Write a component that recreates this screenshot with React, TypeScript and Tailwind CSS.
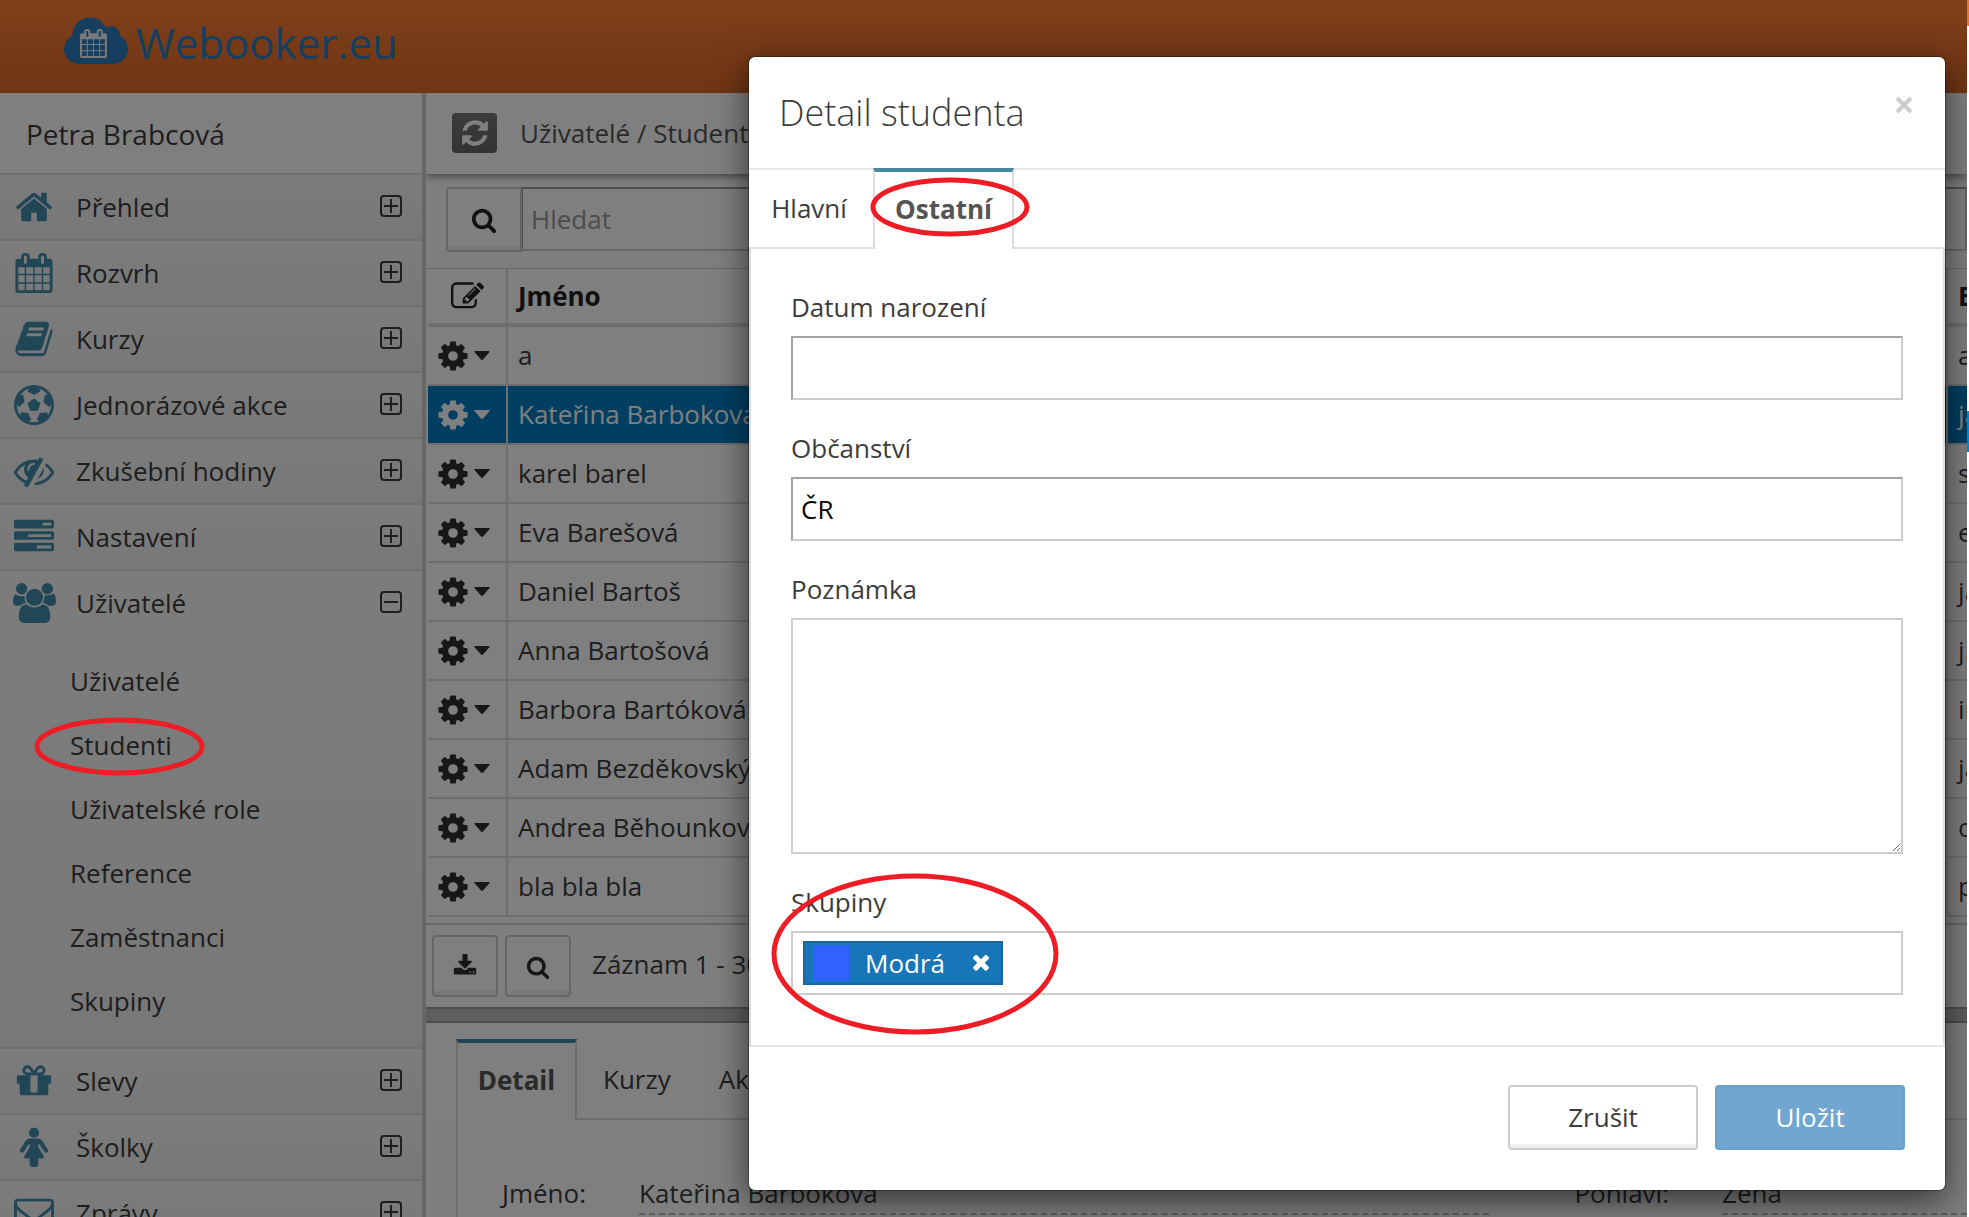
import type { ReactNode } from "react";

const paths = {
  home: "M1472 992v480q0 26-19 45t-45 19h-384v-384h-256v384h-384q-26 0-45-19t-19-45v-480q0-1 .5-3t.5-3l575-474 575 474q1 2 1 6zm223-69l-62 74q-8 9-21 11h-3q-13 0-21-7l-692-577-692 577q-12 8-24 7-13-2-21-11l-62-74q-8-10-7-23.5t11-21.5l719-599q32-26 76-26t76 26l244 204v-195q0-14 9-23t23-9h192q14 0 23 9t9 23v408l219 182q10 8 11 21.5t-7 23.5z",
  calendar:
    "M192 1664h288v-288h-288v288zm352 0h320v-288h-320v288zm-352-352h288v-320h-288v320zm352 0h320v-320h-320v320zm-352-384h288v-288h-288v288zm736 736h320v-288h-320v288zm-384-736h320v-288h-320v288zm768 736h288v-288h-288v288zm-384-352h320v-320h-320v320zm-352-864v-288q0-13-9.5-22.5t-22.5-9.5h-64q-13 0-22.5 9.5t-9.5 22.5v288q0 13 9.5 22.5t22.5 9.5h64q13 0 22.5-9.5t9.5-22.5zm736 864h288v-320h-288v320zm-384-384h320v-288h-320v288zm384 0h288v-288h-288v288zm32-480v-288q0-13-9.5-22.5t-22.5-9.5h-64q-13 0-22.5 9.5t-9.5 22.5v288q0 13 9.5 22.5t22.5 9.5h64q13 0 22.5-9.5t9.5-22.5zm384-64v1280q0 52-38 90t-90 38h-1408q-52 0-90-38t-38-90v-1280q0-52 38-90t90-38h128v-96q0-66 47-113t113-47h64q66 0 113 47t47 113v96h384v-96q0-66 47-113t113-47h64q66 0 113 47t47 113v96h128q52 0 90 38t38 90z",
  book: "M1703 478q40 57 18 129l-275 906q-19 64-76.5 107.5t-122.5 43.5h-923q-77 0-148.5-53.5t-99.5-131.5q-24-67-2-127 0-4 3-27t4-37q1-8-3-21.5t-3-19.5q2-11 8-21t16.5-23.5 16.5-23.5q23-38 45-91.5t30-91.5q3-10 .5-30t-.5-28q3-11 17-28t17-23q21-36 42-92t25-90q1-9-2.5-32t.5-28q4-13 22-30.5t22-22.5q19-26 42.5-84.5t27.5-96.5q1-8-3-25.5t-2-26.5q2-8 9-18t18-23 17-21q8-12 16.5-30.5t15-35 16-36 19.5-32 26.5-23.5 36-11.5 47.5 5.5l-1 3q38-9 51-9h761q74 0 114 56t18 130l-274 906q-36 119-71.5 153.5t-128.5 34.5h-869q-27 0-38 15-11 16-1 43 24 70 144 70h923q29 0 56-15.5t35-41.5l300-987q7-22 5-57 38 15 59 43zm-1064 2q-4 13 2 22.5t20 9.5h608q13 0 25.5-9.5t16.5-22.5l21-64q4-13-2-22.5t-20-9.5h-608q-13 0-25.5 9.5t-16.5 22.5zm-83 256q-4 13 2 22.5t20 9.5h608q13 0 25.5-9.5t16.5-22.5l21-64q4-13-2-22.5t-20-9.5h-608q-13 0-25.5 9.5t-16.5 22.5z",
  futbol:
    "M609 816l287-208 287 208-109 336h-355zm287-816q182 0 348 71t286 191 191 286 71 348-71 348-191 286-286 191-348 71-348-71-286-191-191-286-71-348 71-348 191-286 286-191 348-71zm619 1350q149-203 149-454v-3l-102 89-240-224 63-323 134 12q-150-206-389-282l53 124-287 159-287-159 53-124q-239 76-389 282l135-12 62 323-240 224-102-89v3q0 251 149 454l30-132 326 40 139 298-116 69q117 39 240 39t240-39l-116-69 139-298 326-40z",
  eyeSlash:
    "M555 1335l78-141q-87-63-136-159t-49-203q0-121 61-225-229 117-381 353 167 258 427 375zm389-759q0-20-14-34t-34-14q-125 0-214.5 89.5t-89.5 214.5q0 20 14 34t34 14 34-14 14-34q0-86 61-147t147-61q20 0 34-14t14-34zm363-191q0 7-1 9-106 189-316 567t-315 566l-49 89q-10 16-28 16-12 0-134-70-16-10-16-28 0-12 44-87-143-65-263.5-173t-208.5-245q-20-31-20-69t20-69q153-235 380-371t496-136q89 0 180 17l54-97q10-16 28-16 5 0 18 6t31 15.5 33 18.5 31.5 18.5 19.5 11.5q16 10 16 27zm37 447q0 139-79 253.5t-209 164.500l280-502q8 45 8 84zm448 128q0 35-20 69-39 64-109 145-150 172-347.5 267t-419.5 95l74-132q212-18 392.5-137t301.5-307q-115-179-282-294l63-112q95 64 182.5 153t144.5 184q20 34 20 69z",
  tasks:
    "M1024 1408h640v-128h-640v128zm-384-512h1024v-128h-1024v128zm640-512h384v-128h-384v128zm512 832v256q0 26-19 45t-45 19h-1664q-26 0-45-19t-19-45v-256q0-26 19-45t45-19h1664q26 0 45 19t19 45zm0-512v256q0 26-19 45t-45 19h-1664q-26 0-45-19t-19-45v-256q0-26 19-45t45-19h1664q26 0 45 19t19 45zm0-512v256q0 26-19 45t-45 19h-1664q-26 0-45-19t-19-45v-256q0-26 19-45t45-19h1664q26 0 45 19t19 45z",
  users:
    "M657 896q-162 5-265 128h-134q-82 0-138-40.5t-56-118.5q0-353 124-353 6 0 43.5 21t97.5 42.5 119 21.5q67 0 133-23-5 37-5 66 0 159 81 290zm1071 637q0 120-73 189.5t-194 69.5h-874q-121 0-194-69.5t-73-189.5q0-53 3.5-103.5t14-109 26.5-108.5 43-97.5 62-81 85.5-53.5 111.5-20q10 0 43 21.5t73 48 107 48 135 21.5 135-21.5 107-48 73-48 43-21.5q61 0 111.5 20t85.5 53.5 62 81 43 97.5 26.5 108.5 14 109 3.5 103.5zm-1024-1277q0 106-75 181t-181 75-181-75-75-181 75-181 181-75 181 75 75 181zm704 384q0 159-112.5 271.5t-271.5 112.5-271.5-112.5-112.5-271.5 112.5-271.5 271.5-112.5 271.5 112.5 112.5 271.5zm576 225q0 78-56 118.5t-138 40.5h-134q-103-123-265-128 81-131 81-290 0-29-5-66 66 23 133 23 59 0 119-21.5t97.5-42.5 43.5-21q124 0 124 353zm-128-609q0 106-75 181t-181 75-181-75-75-181 75-181 181-75 181 75 75 181z",
  gift: "M1056 1356v-716h-320v716q0 25 18 38.5t46 13.5h192q28 0 46-13.5t18-38.5zm-456-844h195l-126-161q-26-31-69-31-40 0-68 28t-28 68 28 68 68 28zm688-96q0-40-28-68t-68-28q-43 0-69 31l-125 161h194q40 0 68-28t28-68zm376 256v320q0 14-9 23t-23 9h-96v416q0 40-28 68t-68 28h-1088q-40 0-68-28t-28-68v-416h-96q-14 0-23-9t-9-23v-320q0-14 9-23t23-9h440q-93 0-158.5-65.5t-65.5-158.5 65.5-158.5 158.5-65.5q107 0 168 77l128 165 128-165q61-77 168-77 93 0 158.5 65.5t65.5 158.5-65.5 158.5-158.5 65.5h440q14 0 23 9t9 23z",
  female:
    "M1536 1056q0 40-28 68t-68 28q-51 0-80-43l-227-341h-45v132l247 411q9 15 9 33 0 26-19 45t-45 19h-192v272q0 46-33 79t-79 33h-160q-46 0-79-33t-33-79v-272h-192q-26 0-45-19t-19-45q0-18 9-33l247-411v-132h-45l-227 341q-29 43-80 43-40 0-68-28t-28-68q0-29 16-53l256-384q73-107 176-107h384q103 0 176 107l256 384q16 24 16 53zm-416-800q0 93-65.5 158.5t-158.5 65.5-158.5-65.5-65.5-158.5 65.5-158.5 158.5-65.5 158.5 65.5 65.5 158.5z",
  envelope:
    "M1664 1504v-768q-32 36-69 66-268 206-426 338-51 43-83 67t-86.5 48.5-102.5 24.5h-2q-48 0-102.5-24.5t-86.5-48.5-83-67q-158-132-426-338-37-30-69-66v768q0 13 9.5 22.5t22.5 9.5h1472q13 0 22.5-9.5t9.5-22.5zm0-1051v-24.5l-.5-13-3-12.5-5.5-9-9-7.5-14-2.5h-1472q-13 0-22.5 9.5t-9.5 22.5q0 168 147 284 193 152 401 317 6 5 35 29.5t46 37.5 44.5 31.5 50.5 27.5 43 9h2q20 0 43-9t50.5-27.5 44.5-31.5 46-37.5 35-29.5q208-165 401-317 54-43 100.5-115.5t46.5-131.5zm128-37v1088q0 66-47 113t-113 47h-1472q-66 0-113-47t-47-113v-1088q0-66 47-113t113-47h1472q66 0 113 47t47 113z",
  search:
    "M1216 832q0-185-131.5-316.5t-316.5-131.5-316.5 131.5-131.5 316.5 131.5 316.5 316.5 131.5 316.5-131.5 131.5-316.5zm512 832q0 52-38 90t-90 38q-54 0-90-38l-343-342q-179 124-399 124-143 0-273.5-55.5t-225-150-150-225-55.5-273.5 55.5-273.5 150-225 225-150 273.5-55.5 273.5 55.5 225 150 150 225 55.5 273.5q0 220-124 399l343 343q37 37 37 90z",
  cog: "M1152 896q0-106-75-181t-181-75-181 75-75 181 75 181 181 75 181-75 75-181zm512-109v222q0 12-8 23t-20 13l-185 28q-19 54-39 91 35 50 107 138 10 12 10 25t-9 23q-27 37-99 108t-94 71q-12 0-26-9l-138-108q-44 23-91 38-16 136-29 186-7 28-36 28h-222q-14 0-24.5-8.5t-11.5-21.5l-28-184q-49-16-90-37l-141 107q-10 9-25 9-14 0-25-11-126-114-165-168-7-10-7-23 0-12 8-23 15-21 51-66.5t54-70.5q-27-50-41-99l-183-27q-13-2-21-12.5t-8-23.5v-222q0-12 8-23t19-13l186-28q14-46 39-92-40-57-107-138-10-12-10-24 0-10 9-23 26-36 98.5-107.5t94.5-71.5q13 0 26 10l138 107q44-23 91-38 16-136 29-186 7-28 36-28h222q14 0 24.5 8.5t11.5 21.5l28 184q49 16 90 37l142-107q9-9 24-9 13 0 25 10 129 119 165 170 7 8 7 22 0 12-8 23-15 21-51 66.5t-54 70.5q26 50 41 98l183 28q13 2 21 12.5t8 23.5z",
  refresh:
    "M1639 1056q0 5-1 7-64 268-268 434.5t-478 166.5q-146 0-282.5-55t-243.5-157l-129 129q-19 19-45 19t-45-19-19-45v-448q0-26 19-45t45-19h448q26 0 45 19t19 45-19 45l-137 137q71 66 161 102t187 36q134 0 250-65t186-179q11-17 53-117 8-23 30-23h192q13 0 22.5 9.5t9.5 22.5zm25-800v448q0 26-19 45t-45 19h-448q-26 0-45-19t-19-45 19-45l138-138q-148-137-349-137-134 0-250 65t-186 179q-11 17-53 117-8 23-30 23h-199q-13 0-22.5-9.5t-9.5-22.5v-7q65-268 270-434.5t480-166.5q146 0 284 55.5t245 156.5l130-129q19-19 45-19t45 19 19 45z",
  times:
    "M1490 1322q0 40-28 68l-136 136q-28 28-68 28t-68-28l-294-294-294 294q-28 28-68 28t-68-28l-136-136q-28-28-28-68t28-68l294-294-294-294q-28-28-28-68t28-68l136-136q28-28 68-28t68 28l294 294 294-294q28-28 68-28t68 28l136 136q28 28 28 68t-28 68l-294 294 294 294q28 28 28 68z",
  download:
    "M1344 1344q0-26-19-45t-45-19-45 19-19 45 19 45 45 19 45-19 19-45zm256 0q0-26-19-45t-45-19-45 19-19 45 19 45 45 19 45-19 19-45zm128-224v320q0 40-28 68t-68 28h-1472q-40 0-68-28t-28-68v-320q0-40 28-68t68-28h465l135 136q58 56 136 56t136-56l136-136h464q40 0 68 28t28 68zm-325-569q17 41-14 70l-448 448q-18 19-45 19t-45-19l-448-448q-31-29-14-70 17-39 59-39h256v-448q0-26 19-45t45-19h256q26 0 45 19t19 45v448h256q42 0 59 39z",
  edit: "M888 1184l116-116-152-152-116 116v56h96v96h56zm440-720q-16-16-33 1l-350 350q-17 17-1 33t33-1l350-350q17-17 1-33zm80 594v190q0 119-84.5 203.5t-203.5 84.5h-832q-119 0-203.5-84.5t-84.5-203.5v-832q0-119 84.5-203.5t203.5-84.5h832q63 0 117 25 15 7 18 23 3 17-9 29l-49 49q-14 14-32 8-23-6-45-6h-832q-66 0-113 47t-47 113v832q0 66 47 113t113 47h832q66 0 113-47t47-113v-126q0-13 9-22l64-64q15-15 35-7t20 29zm-96-738l288 288-672 672h-288v-288zm444 132l-92 92-288-288 92-92q28-28 68-28t68 28l152 152q28 28 28 68t-28 68z",
};

type IconName = keyof typeof paths;

function Icon({ name, className, wide }: { name: IconName; className: string; wide?: boolean }) {
  return (
    <svg viewBox={wide ? "64 0 1920 1792" : "0 0 1792 1792"} className={className} fill="currentColor" aria-hidden="true">
      <path d={paths[name]} />
    </svg>
  );
}

function Toggle({ open }: { open?: boolean }) {
  return (
    <svg viewBox="0 0 22 22" className="size-[22px]" fill="none" stroke="currentColor" strokeWidth="2" aria-hidden="true">
      <rect x="1" y="1" width="20" height="20" rx="3" />
      <path d={open ? "M4 11h14" : "M4 11h14M11 4v14"} />
    </svg>
  );
}

function Ring({ className, w, h }: { className: string; w: number; h: number }) {
  return (
    <svg viewBox={`0 0 ${w} ${h}`} className={`pointer-events-none absolute z-20 max-w-none ${className}`} fill="none" aria-hidden="true">
      <ellipse cx={w / 2} cy={h / 2} rx={w / 2 - 3} ry={h / 2 - 3} stroke="#ee1c24" strokeWidth="5" />
    </svg>
  );
}

function MenuItem({ icon, label, open }: { icon: ReactNode; label: string; open?: boolean }) {
  return (
    <button
      type="button"
      className={`flex w-full items-center text-left ${
        open ? "h-[64px] bg-[#f9f9f9]" : "h-[66px] border-b-2 border-[#dedede] bg-linear-to-b from-[#f9f9f9] to-[#f0f0f0]"
      }`}
    >
      <span className="flex w-[68px] shrink-0 justify-center text-[#428eae]">{icon}</span>
      <span className="grow pl-2 text-[26px] leading-9">{label}</span>
      <span className="mr-5 pb-0.5">
        <Toggle open={open} />
      </span>
    </button>
  );
}

const subItems = ["Uživatelé", "Studenti", "Uživatelské role", "Reference", "Zaměstnanci", "Skupiny"];

const students = [
  ["a", "a"],
  ["Kateřina Barboková", "ja"],
  ["karel barel", "s"],
  ["Eva Barešová", "e"],
  ["Daniel Bartoš", "ja"],
  ["Anna Bartošová", "j."],
  ["Barbora Bartóková", "in"],
  ["Adam Bezděkovský", "ja"],
  ["Andrea Běhounková", "o"],
  ["bla bla bla", "p"],
];

function Sidebar() {
  return (
    <aside className="w-[426px] shrink-0 border-r-4 border-[#cfcfcf] bg-[#f4f4f4]">
      <div className="flex h-[82px] items-center border-b-2 border-[#dedede] bg-white pt-0.5 pl-[26px] text-[28px] leading-9">Petra Brabcová</div>
      <nav>
        <MenuItem label="Přehled" icon={<Icon name="home" className="size-10" />} />
        <MenuItem label="Rozvrh" icon={<Icon name="calendar" className="size-10" />} />
        <MenuItem label="Kurzy" icon={<Icon name="book" className="size-10" />} />
        <MenuItem label="Jednorázové akce" icon={<Icon name="futbol" className="size-10" />} />
        <MenuItem label="Zkušební hodiny" icon={<Icon name="eyeSlash" className="size-10" />} />
        <MenuItem label="Nastavení" icon={<Icon name="tasks" className="size-10" />} />
        <MenuItem label="Uživatelé" open icon={<Icon name="users" wide className="h-10 w-[43px]" />} />
        <ul className="border-b-2 border-[#dedede] bg-linear-to-b from-[#f9f9f9] to-[#f0f0f0] pt-3.5 pb-3.5 text-[26px] leading-9">
          {subItems.map((s) => (
            <li key={s} className="relative flex h-[64px] items-center pl-[70px]">
              <a href="#studenti">{s}</a>
              {s === "Studenti" && <Ring className="top-[4px] left-[34px] h-[59px] w-[171px]" w={171} h={59} />}
            </li>
          ))}
        </ul>
        <MenuItem label="Slevy" icon={<Icon name="gift" className="size-10" />} />
        <MenuItem label="Školky" icon={<Icon name="female" className="size-10" />} />
        <MenuItem label="Zprávy" icon={<Icon name="envelope" className="size-10" />} />
      </nav>
    </aside>
  );
}

const toolBtn = "flex items-center justify-center border-2 border-[#cccccc] bg-white shadow-[inset_0_-4px_0_#f0f0f0]";

function Main() {
  return (
    <main className="min-w-0 grow overflow-hidden bg-[#fdfdfd]">
      <div className="relative flex h-[81px] items-center bg-white pb-0.5 pl-[26px] shadow-[0_2px_8px_rgba(0,0,0,0.5)]">
        <button type="button" aria-label="Obnovit" className="flex h-10 w-[45px] items-center justify-center rounded bg-linear-to-b from-[#787878] to-[#666666] text-white">
          <Icon name="refresh" className="size-[30px]" />
        </button>
        <span className="pl-[23px] text-[26px] leading-9 text-[#555555]">Uživatelé / Studenti</span>
      </div>
      <div className="flex h-[94px] items-start pt-[13px] pl-5">
        <button type="button" aria-label="Vyhledat" className={`h-[65px] w-[76px] rounded-l text-[#222222] ${toolBtn}`}>
          <Icon name="search" className="size-[26px]" />
        </button>
        <input
          type="text"
          aria-label="Hledat"
          placeholder="Hledat"
          className="h-16 grow border-y-2 border-r-2 border-l border-t-[#9e9e9e] border-r-[#cccccc] border-b-[#cccccc] border-l-[#9e9e9e] bg-white pl-2 text-[26px] placeholder:text-[#999999]"
        />
      </div>
      <div className="border-t border-b-2 border-[#d0d0d0] pb-1.5 pl-0.5">
        <table className="w-full table-fixed border-separate border-spacing-0 text-left text-[26px] leading-9 whitespace-nowrap">
          <thead>
            <tr className="text-[#222222]">
              <th scope="col" aria-label="Akce" className="h-[58px] w-20 border-r-2 border-b-4 border-[#dcdcdc] bg-white">
                <Icon name="edit" className="mx-auto size-[33px]" />
              </th>
              <th scope="col" className="border-r-2 border-b-4 border-[#dcdcdc] bg-white pl-2.5 font-bold">
                Jméno
              </th>
              <th scope="col" className="w-[19px] overflow-hidden border-b-4 border-[#dcdcdc] bg-white pl-2.5 font-bold">
                E-mail
              </th>
            </tr>
          </thead>
          <tbody>
            {students.map(([name, mail], i) => {
              const cell = i === 1 ? "border-[#dcdcdc] bg-[#007fc4] pb-0.5 text-white" : "border-[#dcdcdc] bg-white pb-0.5";
              return (
                <tr key={name}>
                  <td className={`h-[59px] border-r-2 border-b-2 ${cell} ${i === 1 ? "" : "text-[#2e2e2e]"}`}>
                    <button type="button" aria-label={`Akce: ${name}`} className="flex items-center gap-1 pt-0.5 pl-2">
                      <Icon name="cog" className="size-[34px]" />
                      <svg viewBox="0 0 16 9" className="h-[9px] w-4" fill="currentColor" aria-hidden="true">
                        <path d="M1 0h14q1 0 .6 1L9 8.500q-1 .8-2 0L.4 1Q0 0 1 0z" />
                      </svg>
                    </button>
                  </td>
                  <td className={`border-r-2 border-b-2 pl-2.5 ${cell}`}>{name}</td>
                  <td className={`overflow-hidden border-b-2 pl-2.5 ${cell}`}>{mail}</td>
                </tr>
              );
            })}
          </tbody>
        </table>
      </div>
      <div className="flex h-[82px] items-center pl-1.5">
        <button type="button" aria-label="Stáhnout" className={`h-[62px] w-[66px] rounded text-[#2e2e2e] ${toolBtn}`}>
          <Icon name="download" className="size-[24px]" />
        </button>
        <button type="button" aria-label="Hledat záznam" className={`ml-[7px] h-[62px] w-[66px] rounded pt-0.5 text-[#2e2e2e] ${toolBtn}`}>
          <Icon name="search" className="size-[24px]" />
        </button>
        <span className="pb-1 pl-[21px] text-[26px] leading-9">Záznam 1 - 30</span>
      </div>
      <div className="h-4 border-y-2 border-[#989898] bg-[#bcbcbc]" />
      <div className="flex h-[97px] items-end bg-white pt-4 text-[26px] leading-9">
        <div className="h-full w-[30px] shrink-0" />
        <button type="button" className="h-full w-[121px] shrink-0 border-x-2 border-t-4 border-[#dcdcdc] border-t-[#448aa8] pb-1 font-bold text-[#555555]">
          Detail
        </button>
        <div className="flex h-full grow border-b-2 border-[#dcdcdc]">
          <button type="button" className="ml-[26px]">Kurzy</button>
          <button type="button" className="ml-12">Akce</button>
        </div>
      </div>
      <dl className="ml-[30px] flex h-[200px] border-l-2 border-[#dcdcdc] bg-white pt-[55px] text-[26px] leading-9">
        <dt className="w-32 shrink-0 text-right">Jméno:</dt>
        <dd className="ml-[53px] h-10 w-[850px] shrink-0 border-b-2 border-dashed border-[#bbbbbb]">Kateřina Barboková</dd>
        <dt className="w-[180px] shrink-0 text-right">Pohlaví:</dt>
        <dd className="ml-[53px] h-10 grow border-b-2 border-dashed border-[#bbbbbb]">Žena</dd>
      </dl>
    </main>
  );
}

const field = "w-full border-2 border-t-[#a3a3a3] border-r-[#cccccc] border-b-[#cccccc] border-l-[#a3a3a3] px-2 text-[26px] text-black";

function StudentDialog() {
  return (
    <div role="dialog" aria-labelledby="dialog-title" className="mr-[22px] ml-[749px] grow self-start rounded-md bg-white shadow-[0_10px_34px_rgba(0,0,0,0.6),0_0_0_1px_rgba(0,0,0,0.3)]">
      <div className="flex h-[111px] justify-between pr-8 pl-[30px]">
        <h2 id="dialog-title" className="self-center text-[36px] leading-[48px] font-light">
          Detail studenta
        </h2>
        <button type="button" aria-label="Zavřít" className="mt-[39px] self-start text-[#cccccc]">
          <svg viewBox="0 0 18 18" className="size-[18px]" stroke="currentColor" strokeWidth="4" aria-hidden="true">
            <path d="M2 2l14 14M16 2L2 16" />
          </svg>
        </button>
      </div>
      <div className="flex h-[81px] text-[26px] leading-9">
        <button type="button" className="w-[124px] border-t-2 border-b-2 border-[#dddddd] border-t-[#e5e5e5] pr-1 pb-0.5">
          Hlavní
        </button>
        <button type="button" className="relative w-[141px] border-x-2 border-t-4 border-[#dddddd] border-t-[#4488a2] pb-1 font-bold text-[#555555]">
          Ostatní
          <Ring className="top-[5px] -left-[5px] h-[60px] w-[160px]" w={160} h={60} />
        </button>
        <div className="grow border-t-2 border-b-2 border-[#dddddd] border-t-[#e5e5e5]" />
      </div>
      <form className="border-x-2 border-b-2 border-[#dddddd] border-b-[#e5e5e5] px-10 pt-10 pb-[50px] text-[26px] leading-9">
        <label htmlFor="birth" className="block pb-[11px]">Datum narození</label>
        <input id="birth" type="text" className={`block h-16 ${field}`} />
        <label htmlFor="nation" className="block pt-[30px] pb-[11px]">Občanství</label>
        <input id="nation" type="text" defaultValue="ČR" className={`block h-16 ${field}`} />
        <label htmlFor="note" className="block pt-[30px] pb-[11px]">Poznámka</label>
        <textarea id="note" className="block h-[236px] w-full resize-y border-2 border-[#cccccc] px-2 text-[26px]" />
        <div className="relative">
          <span id="groups-label" className="block pt-[30px] pb-[11px]">Skupiny</span>
          <div role="group" aria-labelledby="groups-label" className="flex h-16 border-2 border-[#cccccc] pt-2 pl-2.5">
            <span className="flex h-11 w-[200px] items-center border-2 border-[#1a669f] bg-[#1676b7] pl-2 text-white">
              <span className="size-9 bg-[#3162ff]" />
              <span className="pl-4">Modrá</span>
              <button type="button" aria-label="Odebrat skupinu" className="mr-2 ml-auto pb-0.5">
                <Icon name="times" className="size-6" />
              </button>
            </span>
          </div>
          <Ring className="top-[19px] -left-[20px] h-[162px] w-[288px]" w={288} h={162} />
        </div>
      </form>
      <div className="flex h-[143px] items-start justify-end gap-[17px] pt-[38px] pr-10 text-[26px]">
        <button type="button" className={`h-[65px] w-[190px] rounded ${toolBtn}`}>Zrušit</button>
        <button type="button" className="h-[65px] w-[190px] rounded border-2 border-[#6a9fc9] bg-[#70a6d0] text-white">Uložit</button>
      </div>
    </div>
  );
}

export default function App() {
  return (
    <div className="flex h-screen overflow-hidden bg-white font-['Open_Sans','Noto_Sans',sans-serif] text-[#3c3c3c]">
      <div className="relative flex min-w-0 grow flex-col overflow-hidden">
        <header className="flex h-[93px] shrink-0 items-center bg-linear-to-b from-[#ff8036] to-[#de6a28] pl-16 text-[#2c7cbe]">
          <svg viewBox="0 0 66 48" className="mb-3 h-12 w-[66px]" aria-hidden="true">
            <g fill="currentColor">
              <circle cx="26" cy="18" r="17.5" />
              <circle cx="47" cy="18" r="9" />
              <circle cx="15" cy="32" r="15" />
              <circle cx="49" cy="32" r="15" />
              <path d="M15 20h34v27H15z" />
            </g>
            <svg x="15" y="12" width="29" height="29" viewBox="0 0 1792 1792" fill="#f0f0f0">
              <path d={paths.calendar} />
            </svg>
          </svg>
          <span className="pb-2 pl-1.5 text-[42px] leading-[60px]">Webooker.eu</span>
        </header>
        <div className="flex min-h-0 grow">
          <Sidebar />
          <Main />
        </div>
        <div className="absolute inset-0 flex overflow-hidden bg-black/50 pt-[57px]">
          <StudentDialog />
        </div>
      </div>
      <div className="flex w-0.5 shrink-0 flex-col">
        <div className="h-[26px] bg-[#e0762f]" />
        <div className="h-[385px]" />
        <div className="h-[41px] bg-[#0086cf]" />
      </div>
    </div>
  );
}
